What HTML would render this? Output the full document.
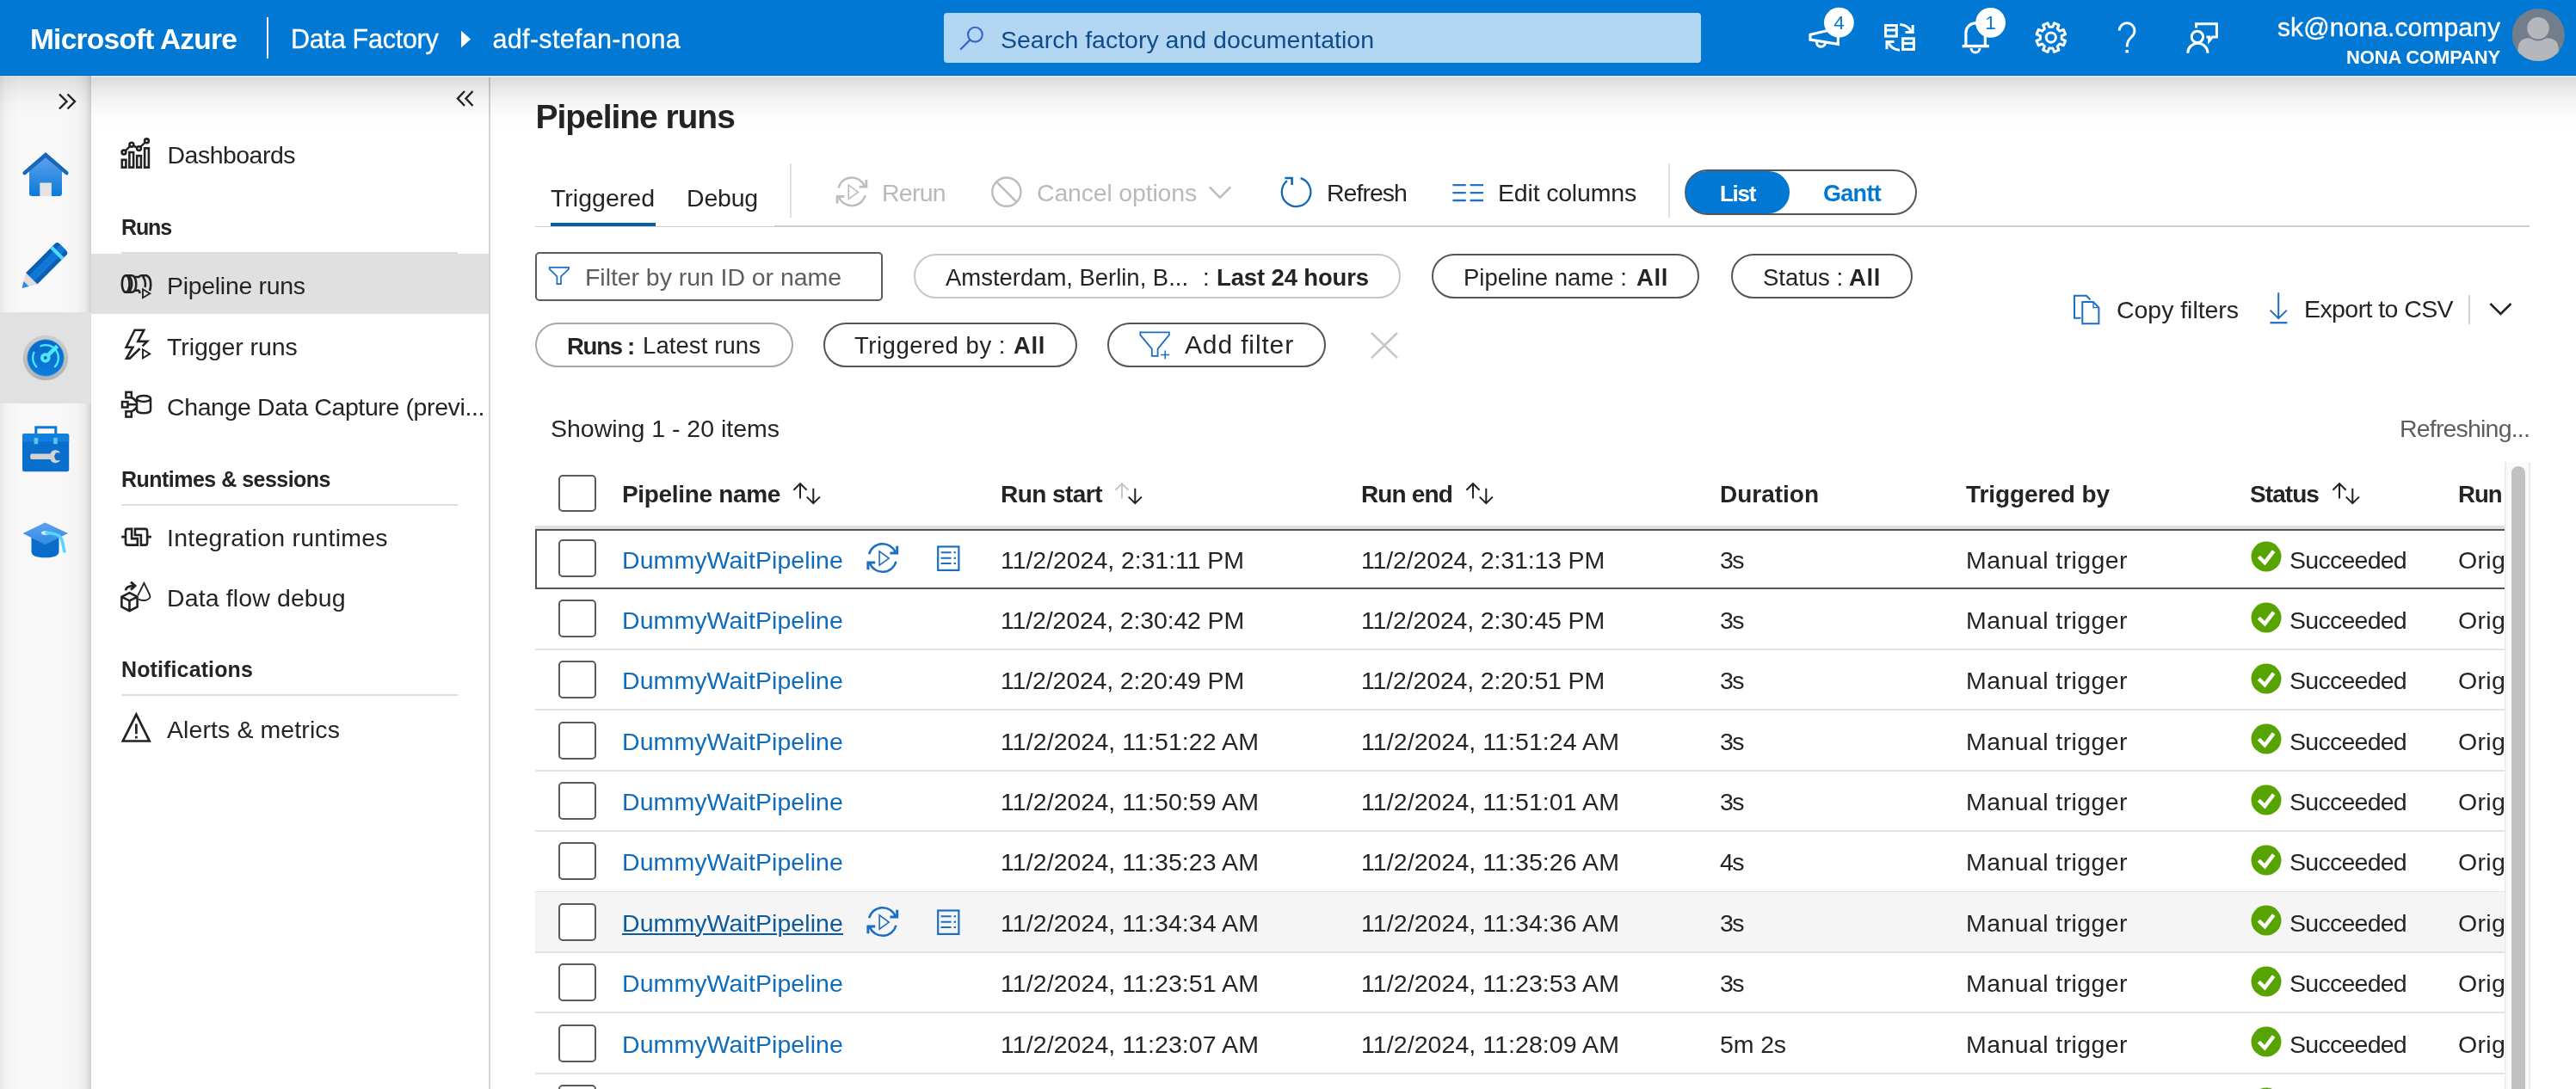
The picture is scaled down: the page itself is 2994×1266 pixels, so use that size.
<!DOCTYPE html><html><head><meta charset="utf-8"><title>Pipeline runs</title><style>

html,body{margin:0;padding:0;}
body{width:2994px;height:1266px;overflow:hidden;background:#fff;position:relative;
font-family:"Liberation Sans",sans-serif;color:#242424;}
#r{position:absolute;left:0;top:0;width:2994px;height:1266px;overflow:hidden;will-change:transform;}
#r div,#r span.t,#r svg{position:absolute;}
#r span.t{white-space:nowrap;line-height:1;display:block;}
#r svg{overflow:visible;}

</style></head><body><div id="r">
<div style="left:106px;top:87px;width:462px;height:1179px;background:#fff;"></div>
<div style="left:106px;top:295px;width:462px;height:70px;background:#e0e0e0;"></div>
<div style="left:568px;top:87px;width:2px;height:1179px;background:#d4d4d4;"></div>
<div style="left:0px;top:88px;width:2994px;height:64px;background:linear-gradient(to bottom,rgba(0,0,0,.15) 0,rgba(0,0,0,.075) 19px,rgba(0,0,0,.035) 33px,rgba(0,0,0,.012) 46px,rgba(0,0,0,0) 62px);"></div>
<div style="left:106px;top:88px;width:2888px;height:1.5px;background:rgba(215,235,252,.9);"></div>
<div style="left:0px;top:87px;width:106px;height:1179px;background:linear-gradient(to right,#e6e6e6 0,#f2f2f2 6px,#f8f8f8 22px,#f8f8f8 72px,#f4f4f4 90px,#ececec 98px,#dedede 103px,#cecece 106px);"></div>
<div style="left:0px;top:88px;width:106px;height:50px;background:linear-gradient(to bottom,rgba(0,0,0,.11) 0,rgba(0,0,0,.05) 16px,rgba(0,0,0,.015) 32px,rgba(0,0,0,0) 48px);"></div>
<div style="left:0px;top:363px;width:106px;height:106px;background:#e1e1e1;"></div>
<div style="left:0px;top:0px;width:2994px;height:88px;background:#0078d4;"></div>
<div style="left:0px;top:86.7px;width:2994px;height:1.3px;background:#0063b1;"></div>
<span class="t" id="t0" style="left:35.0px;top:29.0px;font-size:33.5px;font-weight:700;color:#fff;letter-spacing:-0.793px;">Microsoft Azure</span>
<div style="left:310px;top:20px;width:2px;height:48px;background:#fff;"></div>
<span class="t" id="t1" style="left:338.0px;top:30.0px;font-size:30.5px;font-weight:400;color:#fff;letter-spacing:-0.258px;-webkit-text-stroke:0.3px #fff;">Data Factory</span>
<svg style="left:535px;top:35px" width="14" height="22" viewBox="0 0 14 22"><path d="M1 0.8 L12 10.6 L1 20.4 Z" fill="#fff"/></svg>
<span class="t" id="t2" style="left:572.5px;top:30.0px;font-size:30.5px;font-weight:400;color:#fff;letter-spacing:0.323px;-webkit-text-stroke:0.3px #fff;">adf-stefan-nona</span>
<div style="left:1097px;top:15px;width:880px;height:58px;background:#b3d6f2;border-radius:4px;"></div>
<span class="t" id="t3" style="left:1163.0px;top:32.0px;font-size:28.5px;font-weight:400;color:#0f4c8a;letter-spacing:-0.003px;">Search factory and documentation</span>
<span class="t" id="t4" style="left:2647.0px;top:17.0px;font-size:30px;font-weight:400;color:#fff;letter-spacing:0.116px;-webkit-text-stroke:0.35px #fff;">sk@nona.company</span>
<span class="t" id="t5" style="left:2727.0px;top:56.0px;font-size:22px;font-weight:700;color:#fff;letter-spacing:-0.158px;">NONA COMPANY</span>
<span class="t" id="t6" style="left:194.5px;top:166.0px;font-size:28.5px;font-weight:400;color:#242424;letter-spacing:-0.519px;">Dashboards</span>
<span class="t" id="t7" style="left:141.0px;top:252.0px;font-size:25px;font-weight:700;color:#242424;letter-spacing:-1.125px;">Runs</span>
<div style="left:141px;top:293px;width:391px;height:2px;background:#dedede;"></div>
<span class="t" id="t8" style="left:194.0px;top:318.0px;font-size:28.5px;font-weight:400;color:#242424;letter-spacing:-0.305px;">Pipeline runs</span>
<span class="t" id="t9" style="left:194.0px;top:389.0px;font-size:28.5px;font-weight:400;color:#242424;letter-spacing:-0.065px;">Trigger runs</span>
<span class="t" id="t10" style="left:194.0px;top:459.0px;font-size:28.5px;font-weight:400;color:#242424;letter-spacing:-0.386px;">Change Data Capture (previ...</span>
<span class="t" id="t11" style="left:141.0px;top:545.0px;font-size:25px;font-weight:700;color:#242424;letter-spacing:-0.519px;">Runtimes &amp; sessions</span>
<div style="left:141px;top:586px;width:391px;height:2px;background:#dedede;"></div>
<span class="t" id="t12" style="left:194.0px;top:611.0px;font-size:28.5px;font-weight:400;color:#242424;letter-spacing:0.245px;">Integration runtimes</span>
<span class="t" id="t13" style="left:194.0px;top:681.0px;font-size:28.5px;font-weight:400;color:#242424;letter-spacing:0.121px;">Data flow debug</span>
<span class="t" id="t14" style="left:141.0px;top:766.0px;font-size:25px;font-weight:700;color:#242424;letter-spacing:0.123px;">Notifications</span>
<div style="left:141px;top:807px;width:391px;height:2px;background:#dedede;"></div>
<span class="t" id="t15" style="left:194.0px;top:834.0px;font-size:28.5px;font-weight:400;color:#242424;letter-spacing:0.092px;">Alerts &amp; metrics</span>
<span class="t" id="t16" style="left:622.5px;top:116.0px;font-size:39px;font-weight:700;color:#242424;letter-spacing:-1.047px;">Pipeline runs</span>
<span class="t" id="t17" style="left:640.0px;top:216.0px;font-size:28.5px;font-weight:400;color:#242424;letter-spacing:0.009px;">Triggered</span>
<div style="left:640px;top:258.8px;width:122px;height:4.3px;background:#0a5ea6;"></div>
<span class="t" id="t18" style="left:798.0px;top:216.0px;font-size:28.5px;font-weight:400;color:#242424;letter-spacing:-0.197px;">Debug</span>
<div style="left:622px;top:262.8px;width:280px;height:1.2px;background:#cfcfcf;"></div>
<div style="left:900px;top:262px;width:2040px;height:2px;background:#cdcdcd;"></div>
<div style="left:918px;top:190px;width:2px;height:63px;background:#e1e1e1;"></div>
<span class="t" id="t19" style="left:1025.0px;top:210.0px;font-size:28.5px;font-weight:400;color:#b9b9b9;letter-spacing:-0.725px;">Rerun</span>
<span class="t" id="t20" style="left:1205.0px;top:210.0px;font-size:28.5px;font-weight:400;color:#b9b9b9;letter-spacing:-0.182px;">Cancel options</span>
<span class="t" id="t21" style="left:1542.0px;top:210.0px;font-size:28.5px;font-weight:400;color:#242424;letter-spacing:-0.971px;">Refresh</span>
<span class="t" id="t22" style="left:1741.0px;top:210.0px;font-size:28.5px;font-weight:400;color:#242424;letter-spacing:-0.180px;">Edit columns</span>
<div style="left:1939px;top:190px;width:2px;height:63px;background:#e1e1e1;"></div>
<div style="left:1958px;top:197px;width:269.5px;height:52.5px;border:2px solid #555;border-radius:28px;box-sizing:border-box;background:#fff;"></div>
<div style="left:1959.3px;top:198.6px;width:120.5px;height:49.3px;background:#0078d4;border-radius:28px;"></div>
<span class="t" id="t23" style="left:1999.0px;top:212.0px;font-size:26px;font-weight:700;color:#fff;letter-spacing:-1.309px;">List</span>
<span class="t" id="t24" style="left:2119.0px;top:212.0px;font-size:27px;font-weight:700;color:#0078d4;letter-spacing:-0.700px;">Gantt</span>
<div style="left:622px;top:293px;width:404px;height:57px;border:2px solid #5c5c5c;border-radius:5px;box-sizing:border-box;background:#fff;"></div>
<span class="t" id="t25" style="left:680.0px;top:308.0px;font-size:28.5px;font-weight:400;color:#605e5c;letter-spacing:-0.057px;">Filter by run ID or name</span>
<div style="left:1062px;top:295px;width:566px;height:51.5px;border:2px solid #c8c6c4;border-radius:28px;box-sizing:border-box;background:#fff;"></div>
<span class="t" id="t26" style="left:1099.0px;top:309.0px;font-size:27.5px;font-weight:400;color:#242424;letter-spacing:-0.032px;">Amsterdam, Berlin, B...</span>
<span class="t" id="t27" style="left:1398.0px;top:309.0px;font-size:27.5px;font-weight:400;color:#242424;">:</span>
<span class="t" id="t28" style="left:1414.0px;top:309.0px;font-size:27.5px;font-weight:700;color:#242424;letter-spacing:-0.139px;">Last 24 hours</span>
<div style="left:1664px;top:295px;width:311px;height:51.5px;border:2px solid #555;border-radius:28px;box-sizing:border-box;background:#fff;"></div>
<span class="t" id="t29" style="left:1701.0px;top:309.0px;font-size:27.5px;font-weight:400;color:#242424;letter-spacing:0.029px;">Pipeline name :</span>
<span class="t" id="t30" style="left:1902.0px;top:309.0px;font-size:27.5px;font-weight:700;color:#242424;letter-spacing:0.620px;">All</span>
<div style="left:2012px;top:295px;width:211px;height:51.5px;border:2px solid #555;border-radius:28px;box-sizing:border-box;background:#fff;"></div>
<span class="t" id="t31" style="left:2049.0px;top:309.0px;font-size:27.5px;font-weight:400;color:#242424;letter-spacing:-0.031px;">Status :</span>
<span class="t" id="t32" style="left:2149.0px;top:309.0px;font-size:27.5px;font-weight:700;color:#242424;letter-spacing:0.620px;">All</span>
<span class="t" id="t33" style="left:2460.0px;top:346.0px;font-size:28.5px;font-weight:400;color:#242424;letter-spacing:-0.046px;">Copy filters</span>
<span class="t" id="t34" style="left:2678.0px;top:345.0px;font-size:28.5px;font-weight:400;color:#242424;letter-spacing:-0.583px;">Export to CSV</span>
<div style="left:2869px;top:343px;width:2px;height:34px;background:#d0d0d0;"></div>
<div style="left:622px;top:374.5px;width:300px;height:52.5px;border:2px solid #a8a8a8;border-radius:28px;box-sizing:border-box;background:#fff;"></div>
<span class="t" id="t35" style="left:659.0px;top:389.0px;font-size:27.5px;font-weight:700;color:#242424;letter-spacing:-1.260px;">Runs :</span>
<span class="t" id="t36" style="left:747.0px;top:388.0px;font-size:27.5px;font-weight:400;color:#242424;letter-spacing:0.085px;">Latest runs</span>
<div style="left:956.8px;top:374.5px;width:295px;height:52.5px;border:2px solid #555;border-radius:28px;box-sizing:border-box;background:#fff;"></div>
<span class="t" id="t37" style="left:993.0px;top:388.0px;font-size:27.5px;font-weight:400;color:#242424;letter-spacing:0.526px;">Triggered by :</span>
<span class="t" id="t38" style="left:1178.0px;top:388.0px;font-size:27.5px;font-weight:700;color:#242424;letter-spacing:0.620px;">All</span>
<div style="left:1287px;top:374.5px;width:254px;height:52.5px;border:2px solid #555;border-radius:28px;box-sizing:border-box;background:#fff;"></div>
<span class="t" id="t39" style="left:1377.0px;top:386.0px;font-size:30px;font-weight:400;color:#242424;letter-spacing:0.861px;">Add filter</span>
<span class="t" id="t40" style="left:640.0px;top:484.0px;font-size:28.5px;font-weight:400;color:#242424;letter-spacing:-0.007px;">Showing 1 - 20 items</span>
<span class="t" id="t41" style="left:2789.0px;top:484.0px;font-size:28.5px;font-weight:400;color:#605e5c;letter-spacing:-0.815px;">Refreshing...</span>
<div style="left:649px;top:552px;width:44px;height:43px;border:2px solid #5c5a58;border-radius:5px;box-sizing:border-box;background:#fff;"></div>
<span class="t" id="t42" style="left:723.0px;top:561.0px;font-size:28px;font-weight:700;color:#242424;letter-spacing:-0.331px;">Pipeline name</span>
<span class="t" id="t43" style="left:1163.0px;top:561.0px;font-size:28px;font-weight:700;color:#242424;letter-spacing:-0.545px;">Run start</span>
<span class="t" id="t44" style="left:1582.0px;top:561.0px;font-size:28px;font-weight:700;color:#242424;letter-spacing:-0.857px;">Run end</span>
<span class="t" id="t45" style="left:1999.0px;top:561.0px;font-size:28px;font-weight:700;color:#242424;letter-spacing:-0.014px;">Duration</span>
<span class="t" id="t46" style="left:2285.0px;top:561.0px;font-size:28px;font-weight:700;color:#242424;letter-spacing:-0.087px;">Triggered by</span>
<span class="t" id="t47" style="left:2615.0px;top:561.0px;font-size:28px;font-weight:700;color:#242424;letter-spacing:-0.930px;">Status</span>
<div style="left:2857px;top:552px;width:54px;height:50px;overflow:hidden;"><span class="t" style="left:0;top:9px;font-size:27.5px;font-weight:700;letter-spacing:-0.9px;">Run ID</span></div>
<div style="left:622px;top:611px;width:2289px;height:4.5px;background:#e0e0e0;"></div>
<div style="left:649px;top:626.8px;width:44px;height:44px;border:2px solid #5c5a58;border-radius:5px;box-sizing:border-box;background:#fff;"></div>
<span class="t" id="t48" style="left:723.0px;top:637.0px;font-size:28.5px;font-weight:400;color:#0f6cbd;letter-spacing:0.087px;">DummyWaitPipeline</span>
<span class="t" id="t49" style="left:1163.0px;top:637.0px;font-size:28.5px;font-weight:400;color:#242424;letter-spacing:-0.055px;">11/2/2024, 2:31:11 PM</span>
<span class="t" id="t50" style="left:1582.0px;top:637.0px;font-size:28.5px;font-weight:400;color:#242424;letter-spacing:-0.156px;">11/2/2024, 2:31:13 PM</span>
<span class="t" id="t51" style="left:1999.0px;top:637.0px;font-size:28.5px;font-weight:400;color:#242424;letter-spacing:-1.555px;">3s</span>
<span class="t" id="t52" style="left:2285.0px;top:637.0px;font-size:28.5px;font-weight:400;color:#242424;letter-spacing:0.415px;">Manual trigger</span>
<span class="t" id="t53" style="left:2661.0px;top:637.0px;font-size:28.5px;font-weight:400;color:#242424;letter-spacing:-0.736px;">Succeeded</span>
<div style="left:2857px;top:623.8px;width:54px;height:50px;overflow:hidden;"><span class="t" style="left:0;top:13.20px;font-size:28.5px;letter-spacing:0.3px;">Original</span></div>
<svg style="left:2615.5px;top:629.4px" width="36" height="36" viewBox="0 0 36 36"><circle cx="18" cy="18" r="17.5" fill="#57a300"/><path d="M9.3 18.3 L16.3 25.2 L26.6 11.6" fill="none" stroke="#fff" stroke-width="4.4"/></svg>
<div style="left:622px;top:753.9px;width:2289px;height:2px;background:#e2e2e2;"></div>
<div style="left:649px;top:697.3px;width:44px;height:44px;border:2px solid #5c5a58;border-radius:5px;box-sizing:border-box;background:#fff;"></div>
<span class="t" id="t54" style="left:723.0px;top:707.0px;font-size:28.5px;font-weight:400;color:#0f6cbd;letter-spacing:0.087px;">DummyWaitPipeline</span>
<span class="t" id="t55" style="left:1163.0px;top:707.0px;font-size:28.5px;font-weight:400;color:#242424;letter-spacing:-0.156px;">11/2/2024, 2:30:42 PM</span>
<span class="t" id="t56" style="left:1582.0px;top:707.0px;font-size:28.5px;font-weight:400;color:#242424;letter-spacing:-0.156px;">11/2/2024, 2:30:45 PM</span>
<span class="t" id="t57" style="left:1999.0px;top:707.0px;font-size:28.5px;font-weight:400;color:#242424;letter-spacing:-1.555px;">3s</span>
<span class="t" id="t58" style="left:2285.0px;top:707.0px;font-size:28.5px;font-weight:400;color:#242424;letter-spacing:0.415px;">Manual trigger</span>
<span class="t" id="t59" style="left:2661.0px;top:707.0px;font-size:28.5px;font-weight:400;color:#242424;letter-spacing:-0.736px;">Succeeded</span>
<div style="left:2857px;top:694.3px;width:54px;height:50px;overflow:hidden;"><span class="t" style="left:0;top:12.70px;font-size:28.5px;letter-spacing:0.3px;">Original</span></div>
<svg style="left:2615.5px;top:699.9px" width="36" height="36" viewBox="0 0 36 36"><circle cx="18" cy="18" r="17.5" fill="#57a300"/><path d="M9.3 18.3 L16.3 25.2 L26.6 11.6" fill="none" stroke="#fff" stroke-width="4.4"/></svg>
<div style="left:622px;top:824.3px;width:2289px;height:2px;background:#e2e2e2;"></div>
<div style="left:649px;top:768.0999999999999px;width:44px;height:44px;border:2px solid #5c5a58;border-radius:5px;box-sizing:border-box;background:#fff;"></div>
<span class="t" id="t60" style="left:723.0px;top:777.0px;font-size:28.5px;font-weight:400;color:#0f6cbd;letter-spacing:0.087px;">DummyWaitPipeline</span>
<span class="t" id="t61" style="left:1163.0px;top:777.0px;font-size:28.5px;font-weight:400;color:#242424;letter-spacing:-0.156px;">11/2/2024, 2:20:49 PM</span>
<span class="t" id="t62" style="left:1582.0px;top:777.0px;font-size:28.5px;font-weight:400;color:#242424;letter-spacing:-0.156px;">11/2/2024, 2:20:51 PM</span>
<span class="t" id="t63" style="left:1999.0px;top:777.0px;font-size:28.5px;font-weight:400;color:#242424;letter-spacing:-1.555px;">3s</span>
<span class="t" id="t64" style="left:2285.0px;top:777.0px;font-size:28.5px;font-weight:400;color:#242424;letter-spacing:0.415px;">Manual trigger</span>
<span class="t" id="t65" style="left:2661.0px;top:777.0px;font-size:28.5px;font-weight:400;color:#242424;letter-spacing:-0.736px;">Succeeded</span>
<div style="left:2857px;top:765.0999999999999px;width:54px;height:50px;overflow:hidden;"><span class="t" style="left:0;top:11.90px;font-size:28.5px;letter-spacing:0.3px;">Original</span></div>
<svg style="left:2615.5px;top:770.6999999999999px" width="36" height="36" viewBox="0 0 36 36"><circle cx="18" cy="18" r="17.5" fill="#57a300"/><path d="M9.3 18.3 L16.3 25.2 L26.6 11.6" fill="none" stroke="#fff" stroke-width="4.4"/></svg>
<div style="left:622px;top:894.7px;width:2289px;height:2px;background:#e2e2e2;"></div>
<div style="left:649px;top:838.5px;width:44px;height:44px;border:2px solid #5c5a58;border-radius:5px;box-sizing:border-box;background:#fff;"></div>
<span class="t" id="t66" style="left:723.0px;top:848.0px;font-size:28.5px;font-weight:400;color:#0f6cbd;letter-spacing:0.087px;">DummyWaitPipeline</span>
<span class="t" id="t67" style="left:1163.0px;top:848.0px;font-size:28.5px;font-weight:400;color:#242424;letter-spacing:0.071px;">11/2/2024, 11:51:22 AM</span>
<span class="t" id="t68" style="left:1582.0px;top:848.0px;font-size:28.5px;font-weight:400;color:#242424;letter-spacing:0.071px;">11/2/2024, 11:51:24 AM</span>
<span class="t" id="t69" style="left:1999.0px;top:848.0px;font-size:28.5px;font-weight:400;color:#242424;letter-spacing:-1.555px;">3s</span>
<span class="t" id="t70" style="left:2285.0px;top:848.0px;font-size:28.5px;font-weight:400;color:#242424;letter-spacing:0.415px;">Manual trigger</span>
<span class="t" id="t71" style="left:2661.0px;top:848.0px;font-size:28.5px;font-weight:400;color:#242424;letter-spacing:-0.736px;">Succeeded</span>
<div style="left:2857px;top:835.5px;width:54px;height:50px;overflow:hidden;"><span class="t" style="left:0;top:12.50px;font-size:28.5px;letter-spacing:0.3px;">Original</span></div>
<svg style="left:2615.5px;top:841.1px" width="36" height="36" viewBox="0 0 36 36"><circle cx="18" cy="18" r="17.5" fill="#57a300"/><path d="M9.3 18.3 L16.3 25.2 L26.6 11.6" fill="none" stroke="#fff" stroke-width="4.4"/></svg>
<div style="left:622px;top:965.1px;width:2289px;height:2px;background:#e2e2e2;"></div>
<div style="left:649px;top:908.9000000000001px;width:44px;height:44px;border:2px solid #5c5a58;border-radius:5px;box-sizing:border-box;background:#fff;"></div>
<span class="t" id="t72" style="left:723.0px;top:918.0px;font-size:28.5px;font-weight:400;color:#0f6cbd;letter-spacing:0.087px;">DummyWaitPipeline</span>
<span class="t" id="t73" style="left:1163.0px;top:918.0px;font-size:28.5px;font-weight:400;color:#242424;letter-spacing:0.071px;">11/2/2024, 11:50:59 AM</span>
<span class="t" id="t74" style="left:1582.0px;top:918.0px;font-size:28.5px;font-weight:400;color:#242424;letter-spacing:0.071px;">11/2/2024, 11:51:01 AM</span>
<span class="t" id="t75" style="left:1999.0px;top:918.0px;font-size:28.5px;font-weight:400;color:#242424;letter-spacing:-1.555px;">3s</span>
<span class="t" id="t76" style="left:2285.0px;top:918.0px;font-size:28.5px;font-weight:400;color:#242424;letter-spacing:0.415px;">Manual trigger</span>
<span class="t" id="t77" style="left:2661.0px;top:918.0px;font-size:28.5px;font-weight:400;color:#242424;letter-spacing:-0.736px;">Succeeded</span>
<div style="left:2857px;top:905.9000000000001px;width:54px;height:50px;overflow:hidden;"><span class="t" style="left:0;top:12.10px;font-size:28.5px;letter-spacing:0.3px;">Original</span></div>
<svg style="left:2615.5px;top:911.5000000000001px" width="36" height="36" viewBox="0 0 36 36"><circle cx="18" cy="18" r="17.5" fill="#57a300"/><path d="M9.3 18.3 L16.3 25.2 L26.6 11.6" fill="none" stroke="#fff" stroke-width="4.4"/></svg>
<div style="left:622px;top:1035.5px;width:2289px;height:2px;background:#e2e2e2;"></div>
<div style="left:649px;top:979.3px;width:44px;height:44px;border:2px solid #5c5a58;border-radius:5px;box-sizing:border-box;background:#fff;"></div>
<span class="t" id="t78" style="left:723.0px;top:988.0px;font-size:28.5px;font-weight:400;color:#0f6cbd;letter-spacing:0.087px;">DummyWaitPipeline</span>
<span class="t" id="t79" style="left:1163.0px;top:988.0px;font-size:28.5px;font-weight:400;color:#242424;letter-spacing:0.071px;">11/2/2024, 11:35:23 AM</span>
<span class="t" id="t80" style="left:1582.0px;top:988.0px;font-size:28.5px;font-weight:400;color:#242424;letter-spacing:0.071px;">11/2/2024, 11:35:26 AM</span>
<span class="t" id="t81" style="left:1999.0px;top:988.0px;font-size:28.5px;font-weight:400;color:#242424;letter-spacing:-1.555px;">4s</span>
<span class="t" id="t82" style="left:2285.0px;top:988.0px;font-size:28.5px;font-weight:400;color:#242424;letter-spacing:0.415px;">Manual trigger</span>
<span class="t" id="t83" style="left:2661.0px;top:988.0px;font-size:28.5px;font-weight:400;color:#242424;letter-spacing:-0.736px;">Succeeded</span>
<div style="left:2857px;top:976.3px;width:54px;height:50px;overflow:hidden;"><span class="t" style="left:0;top:11.70px;font-size:28.5px;letter-spacing:0.3px;">Original</span></div>
<svg style="left:2615.5px;top:981.9px" width="36" height="36" viewBox="0 0 36 36"><circle cx="18" cy="18" r="17.5" fill="#57a300"/><path d="M9.3 18.3 L16.3 25.2 L26.6 11.6" fill="none" stroke="#fff" stroke-width="4.4"/></svg>
<div style="left:622px;top:1036.5px;width:2289px;height:70.40000000000009px;background:#f5f5f5;"></div>
<div style="left:622px;top:1105.9px;width:2289px;height:2px;background:#e2e2e2;"></div>
<div style="left:649px;top:1049.7px;width:44px;height:44px;border:2px solid #5c5a58;border-radius:5px;box-sizing:border-box;background:#fff;"></div>
<span class="t" id="t84" style="left:723.0px;top:1059.0px;font-size:28.5px;font-weight:400;color:#0c5a9e;letter-spacing:0.087px;text-decoration:underline;text-decoration-thickness:1.6px;text-underline-offset:1.5px;">DummyWaitPipeline</span>
<span class="t" id="t85" style="left:1163.0px;top:1059.0px;font-size:28.5px;font-weight:400;color:#242424;letter-spacing:0.071px;">11/2/2024, 11:34:34 AM</span>
<span class="t" id="t86" style="left:1582.0px;top:1059.0px;font-size:28.5px;font-weight:400;color:#242424;letter-spacing:0.071px;">11/2/2024, 11:34:36 AM</span>
<span class="t" id="t87" style="left:1999.0px;top:1059.0px;font-size:28.5px;font-weight:400;color:#242424;letter-spacing:-1.555px;">3s</span>
<span class="t" id="t88" style="left:2285.0px;top:1059.0px;font-size:28.5px;font-weight:400;color:#242424;letter-spacing:0.415px;">Manual trigger</span>
<span class="t" id="t89" style="left:2661.0px;top:1059.0px;font-size:28.5px;font-weight:400;color:#242424;letter-spacing:-0.736px;">Succeeded</span>
<div style="left:2857px;top:1046.7px;width:54px;height:50px;overflow:hidden;"><span class="t" style="left:0;top:12.30px;font-size:28.5px;letter-spacing:0.3px;">Original</span></div>
<svg style="left:2615.5px;top:1052.3px" width="36" height="36" viewBox="0 0 36 36"><circle cx="18" cy="18" r="17.5" fill="#57a300"/><path d="M9.3 18.3 L16.3 25.2 L26.6 11.6" fill="none" stroke="#fff" stroke-width="4.4"/></svg>
<div style="left:622px;top:1176.3px;width:2289px;height:2px;background:#e2e2e2;"></div>
<div style="left:649px;top:1120.1px;width:44px;height:44px;border:2px solid #5c5a58;border-radius:5px;box-sizing:border-box;background:#fff;"></div>
<span class="t" id="t90" style="left:723.0px;top:1129.0px;font-size:28.5px;font-weight:400;color:#0f6cbd;letter-spacing:0.087px;">DummyWaitPipeline</span>
<span class="t" id="t91" style="left:1163.0px;top:1129.0px;font-size:28.5px;font-weight:400;color:#242424;letter-spacing:0.071px;">11/2/2024, 11:23:51 AM</span>
<span class="t" id="t92" style="left:1582.0px;top:1129.0px;font-size:28.5px;font-weight:400;color:#242424;letter-spacing:0.071px;">11/2/2024, 11:23:53 AM</span>
<span class="t" id="t93" style="left:1999.0px;top:1129.0px;font-size:28.5px;font-weight:400;color:#242424;letter-spacing:-1.555px;">3s</span>
<span class="t" id="t94" style="left:2285.0px;top:1129.0px;font-size:28.5px;font-weight:400;color:#242424;letter-spacing:0.415px;">Manual trigger</span>
<span class="t" id="t95" style="left:2661.0px;top:1129.0px;font-size:28.5px;font-weight:400;color:#242424;letter-spacing:-0.736px;">Succeeded</span>
<div style="left:2857px;top:1117.1px;width:54px;height:50px;overflow:hidden;"><span class="t" style="left:0;top:11.90px;font-size:28.5px;letter-spacing:0.3px;">Original</span></div>
<svg style="left:2615.5px;top:1122.6999999999998px" width="36" height="36" viewBox="0 0 36 36"><circle cx="18" cy="18" r="17.5" fill="#57a300"/><path d="M9.3 18.3 L16.3 25.2 L26.6 11.6" fill="none" stroke="#fff" stroke-width="4.4"/></svg>
<div style="left:622px;top:1246.7px;width:2289px;height:2px;background:#e2e2e2;"></div>
<div style="left:649px;top:1190.5px;width:44px;height:44px;border:2px solid #5c5a58;border-radius:5px;box-sizing:border-box;background:#fff;"></div>
<span class="t" id="t96" style="left:723.0px;top:1200.0px;font-size:28.5px;font-weight:400;color:#0f6cbd;letter-spacing:0.087px;">DummyWaitPipeline</span>
<span class="t" id="t97" style="left:1163.0px;top:1200.0px;font-size:28.5px;font-weight:400;color:#242424;letter-spacing:0.071px;">11/2/2024, 11:23:07 AM</span>
<span class="t" id="t98" style="left:1582.0px;top:1200.0px;font-size:28.5px;font-weight:400;color:#242424;letter-spacing:0.071px;">11/2/2024, 11:28:09 AM</span>
<span class="t" id="t99" style="left:1999.0px;top:1200.0px;font-size:28.5px;font-weight:400;color:#242424;letter-spacing:-0.125px;">5m 2s</span>
<span class="t" id="t100" style="left:2285.0px;top:1200.0px;font-size:28.5px;font-weight:400;color:#242424;letter-spacing:0.415px;">Manual trigger</span>
<span class="t" id="t101" style="left:2661.0px;top:1200.0px;font-size:28.5px;font-weight:400;color:#242424;letter-spacing:-0.736px;">Succeeded</span>
<div style="left:2857px;top:1187.5px;width:54px;height:50px;overflow:hidden;"><span class="t" style="left:0;top:12.50px;font-size:28.5px;letter-spacing:0.3px;">Original</span></div>
<svg style="left:2615.5px;top:1193.1px" width="36" height="36" viewBox="0 0 36 36"><circle cx="18" cy="18" r="17.5" fill="#57a300"/><path d="M9.3 18.3 L16.3 25.2 L26.6 11.6" fill="none" stroke="#fff" stroke-width="4.4"/></svg>
<div style="left:622px;top:1317.1px;width:2289px;height:2px;background:#e2e2e2;"></div>
<div style="left:649px;top:1260.9px;width:44px;height:44px;border:2px solid #5c5a58;border-radius:5px;box-sizing:border-box;background:#fff;"></div>
<span class="t" id="t102" style="left:723.0px;top:1270.0px;font-size:28.5px;font-weight:400;color:#0f6cbd;letter-spacing:0.087px;">DummyWaitPipeline</span>
<span class="t" id="t103" style="left:1163.0px;top:1270.0px;font-size:28.5px;font-weight:400;color:#242424;letter-spacing:0.071px;">11/2/2024, 11:22:40 AM</span>
<span class="t" id="t104" style="left:1582.0px;top:1270.0px;font-size:28.5px;font-weight:400;color:#242424;letter-spacing:0.071px;">11/2/2024, 11:22:43 AM</span>
<span class="t" id="t105" style="left:1999.0px;top:1270.0px;font-size:28.5px;font-weight:400;color:#242424;letter-spacing:-1.555px;">3s</span>
<span class="t" id="t106" style="left:2285.0px;top:1270.0px;font-size:28.5px;font-weight:400;color:#242424;letter-spacing:0.415px;">Manual trigger</span>
<span class="t" id="t107" style="left:2661.0px;top:1270.0px;font-size:28.5px;font-weight:400;color:#242424;letter-spacing:-0.736px;">Succeeded</span>
<div style="left:2857px;top:1257.9px;width:54px;height:50px;overflow:hidden;"><span class="t" style="left:0;top:12.10px;font-size:28.5px;letter-spacing:0.3px;">Original</span></div>
<svg style="left:2615.5px;top:1263.5px" width="36" height="36" viewBox="0 0 36 36"><circle cx="18" cy="18" r="17.5" fill="#57a300"/><path d="M9.3 18.3 L16.3 25.2 L26.6 11.6" fill="none" stroke="#fff" stroke-width="4.4"/></svg>
<div style="left:622px;top:615px;width:2293px;height:69.8px;border:2px solid #555;box-sizing:border-box;"></div>
<div style="left:2911px;top:520px;width:83px;height:746px;background:#fff;"></div>
<div style="left:2911px;top:536.5px;width:30px;height:730px;background:#fafafa;border-left:2px solid #ececec;border-right:2px solid #ececec;box-sizing:border-box;"></div>
<div style="left:2919px;top:542px;width:16px;height:740px;background:#c1c1c1;border-radius:8px;"></div>
<svg style="left:64px;top:104px;" width="30" height="28" viewBox="64 104 30 28"><path d="M69 109.5 L77.5 118 L69 126.5 M78.5 109.5 L87 118 L78.5 126.5" fill="none" stroke="#222" stroke-width="2.4" /></svg>
<svg style="left:24px;top:175px;" width="58" height="56" viewBox="24 175 58 56"><defs><linearGradient id="gh" x1="0" y1="0" x2="0" y2="1"><stop offset="0" stop-color="#5ea0ef"/><stop offset="1" stop-color="#0a7bd8"/></linearGradient></defs>
<path d="M34 199 L53 182 L72 199 L72 225 Q72 228 69 228 L37 228 Q34 228 34 225 Z" fill="url(#gh)"/>
<path d="M53 177 L79 199.5 Q80.5 201.3 79 202.8 Q77.6 204 76 202.8 L53 183.2 L30 202.8 Q28.4 204 27 202.8 Q25.5 201.3 27 199.5 Z" fill="#1866b9"/>
<rect x="46.3" y="212.5" width="13.6" height="15.5" fill="#e3e3e3"/></svg>
<svg style="left:24px;top:279px;" width="58" height="58" viewBox="24 279 58 58"><g transform="translate(-0.5 0) translate(53 308) scale(0.9) translate(-53 -308) rotate(-45 53 308)">
<path d="M28 297.5 L81 297.5 Q85.5 297.5 85.5 302 L85.5 314 Q85.5 318.5 81 318.5 L28 318.5 Z" fill="#0a5fb4"/>
<rect x="28" y="303" width="57.5" height="10" fill="#1178d6"/>
<rect x="72.5" y="297.5" width="4.6" height="21" fill="#50d9ff"/>
<path d="M28 297.5 L28 318.5 L16 308 Z" fill="#dcdcdc"/>
<path d="M28 297.5 L28 318.5 L11 308 Z" fill="#dedede"/>
<path d="M18.5 303.3 L18.5 312.7 L10.5 308 Z" fill="#2b8be6"/>
</g></svg>
<svg style="left:24px;top:387px;" width="58" height="58" viewBox="24 387 58 58"><defs><linearGradient id="gm" x1="0" y1="0" x2="0" y2="1"><stop offset="0" stop-color="#0868c6"/><stop offset="1" stop-color="#0f7cdb"/></linearGradient>
<linearGradient id="gr" x1="0" y1="0" x2="0" y2="1"><stop offset="0" stop-color="#cdcdcd"/><stop offset="1" stop-color="#b2b2b2"/></linearGradient></defs>
<circle cx="53" cy="416" r="26.3" fill="url(#gr)"/>
<circle cx="53" cy="416" r="21.3" fill="url(#gm)" stroke="#4aa8ee" stroke-width="0.8"/>
<path d="M47.4 402.2 A14.9 14.9 0 0 1 63.9 426.2" fill="none" stroke="#50e6ff" stroke-width="2.3" stroke-linecap="round"/>
<path d="M42.3 426.4 A14.9 14.9 0 0 1 39.5 409.7" fill="none" stroke="#50e6ff" stroke-width="2.3" stroke-linecap="round"/>
<path d="M55.8 412.8 L66.6 402.3" fill="none" stroke="#50e6ff" stroke-width="4.6"/>
<circle cx="52.8" cy="416" r="3.9" fill="#0a62bb" stroke="#50e6ff" stroke-width="3.8"/></svg>
<svg style="left:24px;top:493px;" width="58" height="58" viewBox="24 493 58 58"><rect x="41.8" y="496.8" width="23" height="11" fill="none" stroke="#0b78d8" stroke-width="3"/>
<rect x="26" y="504" width="54.2" height="44.3" rx="2.5" fill="#0a6fcc"/>
<path d="M26 506.5 Q26 504 28.5 504 L77.7 504 Q80.2 504 80.2 506.5 L80.2 513.5 L26 513.5 Z" fill="#1380de"/>
<rect x="39.6" y="509" width="4.6" height="7.2" fill="#5fc3f2"/>
<rect x="62.2" y="509" width="4.6" height="7.2" fill="#5fc3f2"/>
<path d="M37 527.6 L58.5 527.6 A6.6 6.6 0 0 1 70.2 526.3 L65 526.3 L63 530.8 L65 535.3 L70.2 535.3 A6.6 6.6 0 0 1 58.5 534 L37 534 Q35.2 534 35.2 532.2 L35.2 529.4 Q35.2 527.6 37 527.6 Z" fill="#d2d2d2"/></svg>
<svg style="left:24px;top:604px;" width="58" height="48" viewBox="24 604 58 48"><defs><linearGradient id="gc" x1="0" y1="0" x2="0" y2="1"><stop offset="0" stop-color="#5ea0ef"/><stop offset="1" stop-color="#2f8ce0"/></linearGradient></defs>
<path d="M36.5 624 L36.5 641 Q36.5 648.3 52.5 648.3 Q68.5 648.3 68.5 641 L68.5 624 Z" fill="#0a6cc9"/>
<path d="M52.5 607.6 L79 620 L52.5 633.2 L26.5 620 Z" fill="url(#gc)"/>
<ellipse cx="52.5" cy="619.6" rx="4.4" ry="2.4" fill="#d9ecfa"/>
<path d="M54 619.5 Q70 620 72 628 Q73.5 634 74.8 641" fill="none" stroke="#50d9ff" stroke-width="3.6" stroke-linecap="round"/></svg>
<svg style="left:526px;top:100px;" width="30" height="28" viewBox="526 100 30 28"><path d="M540 106 L532 114.5 L540 123 M549.5 106 L541.5 114.5 L549.5 123" fill="none" stroke="#222" stroke-width="2.4" /></svg>
<svg style="left:138px;top:158px;" width="40" height="40" viewBox="138 158 40 40"><g fill="none" stroke="#222" stroke-width="2.6" >
<rect x="141.8" y="185.8" width="4.6" height="8.8"/><rect x="150.4" y="177" width="4.7" height="17.6"/>
<rect x="159.2" y="181.1" width="4.7" height="13.5"/><rect x="168.1" y="172.3" width="4.8" height="22.3"/>
<path d="M145.7 175.3 L151.2 169.9 M155 169.4 L159.4 171.6 M163.2 170.9 L168.8 165.5" stroke-width="2.4"/>
<circle cx="144" cy="177" r="2.4"/><circle cx="152.9" cy="168.2" r="2.4"/><circle cx="161.5" cy="172.6" r="2.4"/><circle cx="170.5" cy="163.8" r="2.4"/></g></svg>
<svg style="left:138px;top:314px;" width="42" height="36" viewBox="138 314 42 36"><g fill="none" stroke="#222" stroke-width="2.6" >
<ellipse cx="146.2" cy="330" rx="4.4" ry="9.8"/>
<path d="M146.2 320.2 L152.6 320.2 Q155 320.2 156.3 322 L161.4 322 Q162.8 320.2 165 320.2 L170 320.2 Q175.2 322 175.2 330.5 Q175.2 335 174 338"/>
<path d="M146.2 339.8 L152.6 339.8 Q155 339.8 156.3 338 L160.5 337.5 Q162.2 338 162.6 341"/>
<path d="M150.2 321 Q153.2 325 153.2 330 Q153.2 335 150.2 339"/>
<path d="M156.4 322 Q158.3 326 158.3 330 Q158.3 334 156.8 337.6"/>
<path d="M166 321 Q169 325.5 169 330 Q169 332.5 168.4 334"/>
<path d="M166 336.2 L174.2 341.3 L166 346.2 Z" stroke-width="1.9"/></g></svg>
<svg style="left:138px;top:380px;" width="42" height="42" viewBox="138 380 42 42"><g fill="none" stroke="#222" stroke-width="2.6"  stroke-linejoin="miter">
<path d="M165.6 402.3 L171 396.9 L160.3 396.9 L167.3 383.7 L156.6 383.7 L146.6 403.7 L154.3 403.7 L147 416.6 L150.8 416.6 L162.6 405.2"/>
<path d="M166 406.3 L174.2 411.4 L166 416.3 Z" stroke-width="1.9"/></g></svg>
<svg style="left:138px;top:452px;" width="42" height="38" viewBox="138 452 42 38"><g fill="none" stroke="#222" stroke-width="2.5" >
<rect x="146.4" y="455.9" width="6.4" height="6.4"/><rect x="142" y="467.1" width="6.5" height="6.4"/><rect x="146.4" y="478.3" width="6.4" height="6.3"/>
<path d="M152.8 462 Q157 464 158.8 467.5 M148.5 470.3 L159 470.3 M152.8 478.6 Q157 476.5 158.8 473.5"/>
<ellipse cx="167" cy="463.4" rx="8" ry="3.5"/>
<path d="M159 463.4 L159 476.6 Q159 480.3 167 480.3 Q175 480.3 175 476.6 L175 463.4"/></g></svg>
<svg style="left:138px;top:610px;" width="42" height="30" viewBox="138 610 42 30"><g fill="none" stroke="#222" stroke-width="2.6" >
<path d="M153.1 614.9 L148.4 614.9 Q146 614.9 146 617.3 L146 631.2 Q146 633.6 148.4 633.6 L159.8 633.6 L159.8 626.1 L153.1 626.1 Z"/>
<path d="M157 614.9 L168.7 614.9 Q171.1 614.9 171.1 617.3 L171.1 631.2 Q171.1 633.6 168.7 633.6 L163.9 633.6 L163.9 622 L157 622 Z"/>
<path d="M141.2 624.2 L145.4 624.2 M171.6 624.2 L175.9 624.2" stroke-width="2.8"/></g></svg>
<svg style="left:138px;top:672px;" width="42" height="42" viewBox="138 672 42 42"><g fill="none" stroke="#222" stroke-width="2.6" >
<path d="M150.5 689.2 L159.6 693.9 L159.6 705.4 L150.5 710.2 L141.4 705.4 L141.4 693.9 Z M141.4 693.9 L150.5 698.4 L159.6 693.9 M150.5 698.4 L150.5 710.2"/>
<path d="M160.2 692.3 L167.4 677.8 L174 691.5 Q176 696 169.5 697.8 Q164 698.6 161 696.4" stroke-width="1.8"/>
<path d="M146 686.3 Q146.5 681 155.5 681.1" stroke-width="2.9"/>
<path d="M152 676.6 L157 681.1 L152 685.6" stroke-width="2.9"/></g></svg>
<svg style="left:138px;top:824px;" width="42" height="42" viewBox="138 824 42 42"><g fill="none" stroke="#222" stroke-width="2.7" >
<path d="M158.4 830.6 L173.7 861.5 L142.8 861.5 Z"/>
<path d="M158.4 841.4 L158.4 853.2 M158.4 855.8 L158.4 858.4" stroke-width="2.7"/></g></svg>
<svg style="left:1112px;top:28px;" width="36" height="34" viewBox="1112 28 36 34"><circle cx="1133.4" cy="40.2" r="8.4" fill="none" stroke="#3a62cc" stroke-width="2.1" /><path d="M1127.4 46.4 L1116.8 57" fill="none" stroke="#3a62cc" stroke-width="2.2"  stroke-linecap="round"/></svg>
<svg style="left:2098px;top:6px;" width="60" height="56" viewBox="2098 6 60 56"><path d="M2104 40.2 L2136.4 32.8 L2136.4 51.4 L2104 46.2 Z" fill="none" stroke="#fff" stroke-width="3.2" />
<path d="M2111.5 48.5 A5 5 0 0 0 2121.5 50" fill="none" stroke="#fff" stroke-width="3" />
<circle cx="2137.4" cy="26.2" r="17.4" fill="#fff"/></svg>
<span class="t" id="t108" style="left:2131.3px;top:16.0px;font-size:22.5px;font-weight:400;color:#0078d4;">4</span>
<svg style="left:2186px;top:24px;" width="44" height="38" viewBox="2186 24 44 38"><g fill="none" stroke="#fff" stroke-width="3" >
<rect x="2191.5" y="29.5" width="12.8" height="12.6"/><path d="M2191.5 35 L2204.3 35"/>
<rect x="2211.6" y="44.8" width="12.8" height="12.6"/><path d="M2211.6 50.4 L2224.4 50.4"/>
<path d="M2208.3 28.6 Q2217 29 2221.3 36.5"/><path d="M2214.5 37.6 L2223.2 37.6 L2223.2 29"/>
<path d="M2208 58.2 Q2199.5 58 2195 50"/><path d="M2201.6 48.6 L2193 48.6 L2193 57.2"/></g></svg>
<svg style="left:2276px;top:6px;" width="60" height="60" viewBox="2276 6 60 60"><path d="M2284.9 53.4 L2284.9 38 A11.2 11.2 0 0 1 2307.3 38 L2307.3 53.4" fill="none" stroke="#fff" stroke-width="3.2" />
<path d="M2280.6 53.6 L2311.8 53.6" fill="none" stroke="#fff" stroke-width="3.4" />
<path d="M2291 56 A5 5 0 0 0 2301 56" fill="none" stroke="#fff" stroke-width="3" />
<circle cx="2313.6" cy="26.4" r="17.4" fill="#fff"/></svg>
<span class="t" id="t109" style="left:2307.3px;top:16.0px;font-size:22.5px;font-weight:400;color:#0078d4;">1</span>
<svg style="left:2362px;top:22px;" width="44" height="44" viewBox="2362 22 44 44"><path d="M2387.6 26.8 L2393.0 29.1 L2391.2 33.4 L2394.0 36.2 L2398.3 34.4 L2400.6 39.8 L2396.2 41.6 L2396.2 45.6 L2400.6 47.4 L2398.3 52.8 L2394.0 51.0 L2391.2 53.8 L2393.0 58.1 L2387.6 60.4 L2385.8 56.0 L2381.8 56.0 L2380.0 60.4 L2374.6 58.1 L2376.4 53.8 L2373.6 51.0 L2369.3 52.8 L2367.0 47.4 L2371.4 45.6 L2371.4 41.6 L2367.0 39.8 L2369.3 34.4 L2373.6 36.2 L2376.4 33.4 L2374.6 29.1 L2380.0 26.8 L2381.8 31.2 L2385.8 31.2 Z" fill="none" stroke="#fff" stroke-width="3"  stroke-linejoin="round"/><circle cx="2383.8" cy="43.6" r="5.6" fill="none" stroke="#fff" stroke-width="3" /></svg>
<svg style="left:2458px;top:22px;" width="30" height="44" viewBox="2458 22 30 44"><path d="M2463.2 35.6 A8.9 8.9 0 0 1 2481 35.8 Q2481 40 2476 44.5 Q2472.2 48 2472.2 54.6" fill="none" stroke="#fff" stroke-width="3" /><rect x="2470.4" y="58" width="3.6" height="3.4" fill="#fff"/></svg>
<svg style="left:2538px;top:24px;" width="44" height="42" viewBox="2538 24 44 42"><g fill="none" stroke="#fff" stroke-width="3" >
<circle cx="2553.9" cy="42.9" r="6.7"/>
<path d="M2542.8 61.8 A11.6 11.6 0 0 1 2566 61.8"/>
<path d="M2552.6 32.6 L2552.6 27.8 L2576.4 27.8 L2576.4 43 L2571.5 43 L2567.6 47.6 L2567.6 43 L2564.4 43"/></g></svg>
<svg style="left:2919px;top:9px" width="63" height="63" viewBox="2919 9 63 63"><defs><clipPath id="av"><circle cx="2950.2" cy="40.5" r="30.6"/></clipPath></defs>
<circle cx="2950.2" cy="40.5" r="30.6" fill="#737e8c"/>
<g clip-path="url(#av)" fill="#b6b7bd"><circle cx="2950" cy="32.8" r="12.8"/><path d="M2926.5 80 L2926.5 58 Q2926.5 44.3 2940 44.3 Q2950 50.5 2960 44.3 Q2973.8 44.3 2973.8 58 L2973.8 80 Z"/></g></svg>
<svg style="left:968px;top:202px;" width="44" height="42" viewBox="968 202 44 42"><g fill="none" stroke="#bcbcbc" stroke-width="2.3" ><path d="M974.4 218.5 A16.1 16.1 0 0 1 1005.0 216.8"/><path d="M998.6 217.2 L1006.9 217.2 L1006.9 209.0" stroke-width="2.8"/><path d="M1005.6 227.1 A16.1 16.1 0 0 1 975.0 228.8"/><path d="M981.4 228.4 L973.1 228.4 L973.1 236.6" stroke-width="2.8"/><path d="M986.3 215.2 L997.4 223.4 L986.3 231.4 Z" stroke-width="1.6"/></g></svg>
<svg style="left:1150px;top:204px;" width="40" height="40" viewBox="1150 204 40 40"><circle cx="1169.9" cy="223.1" r="16.6" fill="none" stroke="#bcbcbc" stroke-width="2.4" /><path d="M1158.2 211.4 L1181.6 234.8" fill="none" stroke="#bcbcbc" stroke-width="2.4" /></svg>
<svg style="left:1402px;top:212px;" width="32" height="22" viewBox="1402 212 32 22"><path d="M1405.8 217.3 L1418 229.6 L1430.2 217.3" fill="none" stroke="#bcbcbc" stroke-width="2.5" /></svg>
<svg style="left:1486px;top:202px;" width="42" height="42" viewBox="1486 202 42 42"><g fill="none" stroke="#1267b4" stroke-width="2.3" >
<path d="M1511.6 207.2 A16.8 16.8 0 1 1 1496 210.2"/>
<path d="M1493.4 207 L1501.6 207 L1501.6 215" stroke-width="2.6"/></g></svg>
<svg style="left:1686px;top:212px;" width="40" height="26" viewBox="1686 212 40 26"><path d="M1688.4 215.2 H1703.8 M1708.6 215.2 H1724 M1688.4 224.1 H1703.8 M1708.6 224.1 H1724 M1688.4 233 H1703.8 M1708.6 233 H1724" fill="none" stroke="#2472c8" stroke-width="2.3" /></svg>
<svg style="left:635px;top:307px;" width="30" height="28" viewBox="635 307 30 28"><path d="M638.7 310.9 L661 310.9 L661 312.8 L652 321.4 L652 330.2 L647.4 330.2 L647.4 321.4 L638.7 312.8 Z" fill="none" stroke="#1b6ec2" stroke-width="1.7" /></svg>
<svg style="left:1322px;top:383px;" width="42" height="38" viewBox="1322 383 42 38"><path d="M1325.3 386.4 L1358.9 386.4 L1358.9 389.4 L1345.6 405.6 L1345.6 413.8 L1338.8 413.8 L1338.8 405.6 L1325.3 389.4 Z" fill="none" stroke="#1b6ec2" stroke-width="1.8" /><path d="M1349.2 412.4 H1359.2 M1354.2 407.4 V417.4" fill="none" stroke="#1b6ec2" stroke-width="1.5" /></svg>
<svg style="left:1590px;top:383px;" width="38" height="36" viewBox="1590 383 38 36"><path d="M1594 387 L1624 416.2 M1624 387 L1594 416.2" fill="none" stroke="#c6c6c6" stroke-width="2.5" /></svg>
<svg style="left:2406px;top:340px;" width="38" height="40" viewBox="2406 340 38 40"><g fill="none" stroke="#1b6ec2" stroke-width="2" >
<path d="M2418.5 369.8 L2411 369.8 L2411 343.8 L2425 343.8 L2429.5 348.5"/>
<path d="M2420.3 351 L2433 351 L2439.4 357.6 L2439.4 376.2 L2420.3 376.2 Z"/>
<path d="M2433 351.4 L2433 357.6 L2439 357.6" stroke-width="1.4"/></g></svg>
<svg style="left:2636px;top:338px;" width="26" height="40" viewBox="2636 338 26 40"><path d="M2648.2 340.2 V369.6 M2638.6 360.6 L2648.2 370.2 L2657.8 360.6" fill="none" stroke="#1b6ec2" stroke-width="2" /><path d="M2638.4 375.2 H2658.4" fill="none" stroke="#1b6ec2" stroke-width="2.2" /></svg>
<svg style="left:2890px;top:348px;" width="32" height="22" viewBox="2890 348 32 22"><path d="M2894.4 353 L2906.4 365 L2918.4 353" fill="none" stroke="#222" stroke-width="2.5" /></svg>
<svg style="left:920px;top:558px;" width="36" height="32" viewBox="920 558 36 32"><path d="M930 562.6 V579.6 M922.4 569.8 L930 562.2 L937.6 569.8" fill="none" stroke="#222" stroke-width="2" /><path d="M945.3 567.8 V584.8 M937.6999999999999 577.6 L945.3 585.2 L952.9 577.6" fill="none" stroke="#222" stroke-width="2" /></svg>
<svg style="left:1294px;top:558px;" width="36" height="32" viewBox="1294 558 36 32"><path d="M1304 562.6 V579.6 M1296.4 569.8 L1304 562.2 L1311.6 569.8" fill="none" stroke="#c8c8c8" stroke-width="2" /><path d="M1319.3 567.8 V584.8 M1311.7 577.6 L1319.3 585.2 L1326.8999999999999 577.6" fill="none" stroke="#222" stroke-width="2" /></svg>
<svg style="left:1702.3px;top:558px;" width="36" height="32" viewBox="1702.3 558 36 32"><path d="M1712.3 562.6 V579.6 M1704.7 569.8 L1712.3 562.2 L1719.8999999999999 569.8" fill="none" stroke="#222" stroke-width="2" /><path d="M1727.6 567.8 V584.8 M1720.0 577.6 L1727.6 585.2 L1735.1999999999998 577.6" fill="none" stroke="#222" stroke-width="2" /></svg>
<svg style="left:2708.5px;top:558px;" width="36" height="32" viewBox="2708.5 558 36 32"><path d="M2718.5 562.6 V579.6 M2710.9 569.8 L2718.5 562.2 L2726.1 569.8" fill="none" stroke="#222" stroke-width="2" /><path d="M2733.8 567.8 V584.8 M2726.2000000000003 577.6 L2733.8 585.2 L2741.4 577.6" fill="none" stroke="#222" stroke-width="2" /></svg>
<svg style="left:1004px;top:628.0px;" width="44" height="42" viewBox="1004 628.0 44 42"><g fill="none" stroke="#1b6ec2" stroke-width="2.5" ><path d="M1010.2 644.2 A16.1 16.1 0 0 1 1040.8 642.5"/><path d="M1034.4 642.9 L1042.7 642.9 L1042.7 634.7" stroke-width="3.0"/><path d="M1041.4 652.8 A16.1 16.1 0 0 1 1010.8 654.5"/><path d="M1017.2 654.1 L1008.9 654.1 L1008.9 662.3" stroke-width="3.0"/><path d="M1022.1 640.9 L1033.2 649.1 L1022.1 657.1 Z" stroke-width="1.6"/></g></svg>
<svg style="left:1086px;top:632.0px;" width="32" height="34" viewBox="1086 632.0 32 34"><rect x="1090.2" y="635.5" width="24.2" height="27.4" fill="none" stroke="#1b6ec2" stroke-width="2.2" /><path d="M1093.6 642.2 H1105.6 M1093.6 648.7 H1105.6 M1093.6 655.0 H1105.6" fill="none" stroke="#1b6ec2" stroke-width="2" /><path d="M1108.6 642.2 H1111 M1108.6 648.7 H1111 M1108.6 655.0 H1111" fill="none" stroke="#1b6ec2" stroke-width="2" /></svg>
<svg style="left:1004px;top:1050.9px;" width="44" height="42" viewBox="1004 1050.9 44 42"><g fill="none" stroke="#1b6ec2" stroke-width="2.5" ><path d="M1010.2 1067.1 A16.1 16.1 0 0 1 1040.8 1065.4"/><path d="M1034.4 1065.8 L1042.7 1065.8 L1042.7 1057.6" stroke-width="3.0"/><path d="M1041.4 1075.7 A16.1 16.1 0 0 1 1010.8 1077.4"/><path d="M1017.2 1077.0 L1008.9 1077.0 L1008.9 1085.2" stroke-width="3.0"/><path d="M1022.1 1063.8 L1033.2 1072.0 L1022.1 1080.0 Z" stroke-width="1.6"/></g></svg>
<svg style="left:1086px;top:1054.9px;" width="32" height="34" viewBox="1086 1054.9 32 34"><rect x="1090.2" y="1058.4" width="24.2" height="27.4" fill="none" stroke="#1b6ec2" stroke-width="2.2" /><path d="M1093.6 1065.1000000000001 H1105.6 M1093.6 1071.6000000000001 H1105.6 M1093.6 1077.9 H1105.6" fill="none" stroke="#1b6ec2" stroke-width="2" /><path d="M1108.6 1065.1000000000001 H1111 M1108.6 1071.6000000000001 H1111 M1108.6 1077.9 H1111" fill="none" stroke="#1b6ec2" stroke-width="2" /></svg>
</div></body></html>
